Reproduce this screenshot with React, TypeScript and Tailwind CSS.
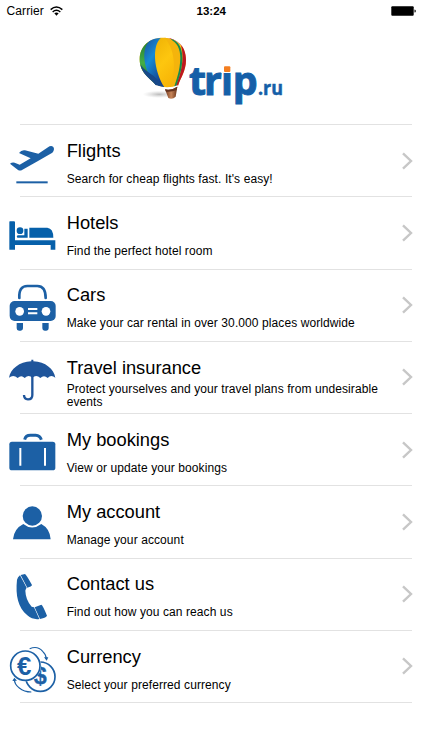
import type { ReactNode } from 'react';

const blue = '#1c60a5';

function BalloonLogo() {
  return (
    <svg width="165" height="80" viewBox="0 0 495 240" role="img" aria-label="trip.ru">
      <defs>
        <radialGradient id="shadow">
          <stop offset="0" stopColor="#777" stopOpacity=".5" />
          <stop offset="1" stopColor="#aaa" stopOpacity="0" />
        </radialGradient>
        <linearGradient id="yellow" x1="0" y1="0" x2="1" y2="1">
          <stop offset="0" stopColor="#e8a800" />
          <stop offset=".5" stopColor="#fdc60f" />
          <stop offset="1" stopColor="#f3a800" />
        </linearGradient>
        <linearGradient id="azure" x1="0" y1="0" x2=".6" y2="1">
          <stop offset="0" stopColor="#1d4f9b" />
          <stop offset=".45" stopColor="#168bd5" />
          <stop offset="1" stopColor="#153f8b" />
        </linearGradient>
        <linearGradient id="green" x1="0" y1="0" x2="0" y2="1">
          <stop offset="0" stopColor="#207b36" />
          <stop offset=".5" stopColor="#45ae46" />
          <stop offset="1" stopColor="#146c3d" />
        </linearGradient>
        <linearGradient id="basket">
          <stop offset="0" stopColor="#71391f" />
          <stop offset=".5" stopColor="#c8865a" />
          <stop offset="1" stopColor="#693217" />
        </linearGradient>
      </defs>
      <ellipse cx="88" cy="193" rx="50" ry="11" fill="url(#shadow)" />
      <path d="M78 166C60 143 29 130 29 88C29 49 59 23 98 23C140 23 168 49 168 90C168 123 151 145 144 167C128 176 96 176 78 166Z" fill="url(#yellow)" />
      <path d="M78 166C60 143 29 130 29 88C29 60 43 41 64 31C42 55 43 100 57 126Z" fill="url(#green)" />
      <path d="M78 166C43 128 30 61 58 34C68 27 80 24 92 24C66 48 70 119 103 172Z" fill="url(#azure)" />
      <path d="M78 166C66 148 38 139 31 103C43 123 66 131 84 151L103 172Z" fill="#174889" />
      <path d="M110 24C126 26 145 35 153 46C165 90 152 135 136 170L144 167C151 145 168 123 168 90C168 68 161 52 150 41C137 29 120 23 110 24Z" fill="#bd1722" />
      <path d="M122 27C145 32 157 53 157 83C157 118 146 146 138 169L131 171C142 141 151 91 138 50Z" fill="#178a4e" />
      <path d="M118 26C142 36 151 57 151 84C150 121 140 149 132 171L120 173C138 127 138 61 104 23Z" fill="#f4b40c" />
      <path d="M78 168C99 177 126 176 144 168" fill="none" stroke="#fff" strokeWidth="5" />
      <path d="M105 178Q124 182 142 170L137 200Q127 210 115 204Z" fill="url(#basket)" />
      <path d="M105 178Q124 182 142 170L140 180Q124 187 108 185Z" fill="#64331f" />
      <g fill="#155fa8" stroke="#155fa8" fontFamily='"Open Sans", sans-serif' fontWeight="700">
        <text x="177 222 273 308" y="196" fontSize="118" strokeWidth="3">trip</text>
        <text x="384" y="196" fontSize="57" strokeWidth="1.500" textLength="75" lengthAdjust="spacingAndGlyphs">.ru</text>
      </g>
      <path d="M274 96h36v33h-36z" fill="#fff" />
      <rect x="282" y="109" width="19" height="17" rx="3" fill="#f47e20" />
    </svg>
  );
}

function Icon({ top, children }: { top: number; children: ReactNode }) {
  return (
    <svg className="shrink-0" width="56" height="72" viewBox={`0 ${top} 168 216`} fill={blue} aria-hidden="true">
      {children}
    </svg>
  );
}

const rows = [
  {
    title: 'Flights',
    text: "Search for cheap flights fast. It's easy!",
    icon: (
      <Icon top={12}>
        <path d="M30 128Q36 123 44 125L59 131L92 112L57 96Q64 86 75 88L115 98L144 79Q153 72 160 78Q165 86 157 95L114 120L66 147Q60 151 53 146Z" />
        <path d="M49 181h94v6H49z" />
      </Icon>
    ),
  },
  {
    title: 'Hotels',
    text: 'Find the perfect hotel room',
    icon: (
      <Icon top={-11}>
        <g fill="#0660aa">
          <path d="M29 62h13q3 0 3 3v54h121v28h-14v-14H45v14H28V64z" />
          <circle cx="60" cy="90" r="10" />
          <path d="M73 84h10v27H52q-4-5 1-7h20zM88 81h54q18 2 18 30H88z" />
        </g>
      </Icon>
    ),
  },
  {
    title: 'Cars',
    text: 'Make your car rental in over 30.000 places worldwide',
    icon: (
      <Icon top={-20}>
        <path d="M58 67Q56 31 82 31H112Q137 31 137 67" fill="none" stroke={blue} strokeWidth="8" strokeLinecap="round" />
        <rect x="29" y="76" width="138" height="60" rx="15" />
        <path d="M50 142h19v16q0 7-7 7h-5q-7 0-7-7zM127 142h19v16q0 7-7 7h-5q-7 0-7-7z" />
        <circle cx="59" cy="107" r="13" fill="#fff" />
        <circle cx="138" cy="107" r="13" fill="#fff" />
        <path d="M84 97h28v6H84zM84 110h28v6H84z" fill="#fff" />
      </Icon>
    ),
  },
  {
    title: 'Travel insurance',
    text: 'Protect yourselves and your travel plans from undesirable events',
    icon: (
      <Icon top={-13}>
        <g fill="#1f559b">
          <path d="M27 97C31 72 58 49 94 48V43h6v5C136 49 162 72 166 97Q153 87 143 98Q132 87 121 98Q109 87 97 97Q86 87 74 98Q64 87 53 98Q40 87 27 97Z" />
          <path d="M97 92V149Q97 162 84 162Q72 161 72 149" fill="none" stroke="#1f559b" strokeWidth="7" />
        </g>
      </Icon>
    ),
  },
  {
    title: 'My bookings',
    text: 'View or update your bookings',
    icon: (
      <Icon top={-21}>
        <path d="M74 56Q77 43 91 43H107Q120 44 124 56" fill="none" stroke={blue} strokeWidth="9" />
        <rect x="28" y="62" width="138" height="86" rx="8" />
        <path d="M58 81h6v53h-6zM132 81h6v53h-6z" fill="#fff" />
      </Icon>
    ),
  },
  {
    title: 'My account',
    text: 'Manage your account',
    icon: (
      <Icon top={-29}>
        <circle cx="97" cy="61" r="29" />
        <path d="M39 131Q42 99 70 85Q96 106 124 85Q150 99 152 131Z" />
      </Icon>
    ),
  },
  {
    title: 'Contact us',
    text: 'Find out how you can reach us',
    icon: (
      <Icon top={-22}>
        <path d="M60 30L80 67Q77 72 76 76Q77 104 95 124L102 126L118 161Q98 164 82 150C54 126 46 91 51 43Q53 35 60 30ZM62 29L75 26Q79 28 96 59Q95 64 82 67ZM104 126L124 118Q128 119 141 151Q140 156 120 161Z" />
      </Icon>
    ),
  },
  {
    title: 'Currency',
    text: 'Select your preferred currency',
    icon: (
      <Icon top={-16}>
        <circle cx="121" cy="124" r="44" fill="none" stroke={blue} strokeWidth="5" />
        <text x="101" y="147" fontSize="72" textLength="39" lengthAdjust="spacingAndGlyphs" fontFamily='"Liberation Sans", sans-serif' fontWeight="700" stroke={blue} strokeWidth="1">$</text>
        <circle cx="76" cy="91" r="47" fill="#fff" />
        <circle cx="76" cy="91" r="44" fill="none" stroke={blue} strokeWidth="5" />
        <path d="M89 40Q113 30 128 48Q138 57 139 71M94 170Q72 170 58 158Q43 147 43 131" fill="none" stroke={blue} strokeWidth="3.500" />
        <path d="M132 66h13l-5 10zM37 137l6-10 8 9z" />
        <text x="51" y="119" fontSize="80" textLength="43" lengthAdjust="spacingAndGlyphs" fontFamily='"Liberation Sans", sans-serif' fontWeight="700">€</text>
      </Icon>
    ),
  },
];

export default function App() {
  return (
    <div className="h-[750px] w-[422px] overflow-hidden bg-white font-['Liberation_Sans',Arial,sans-serif] text-black">
      <div className="grid h-[22px] grid-cols-3 items-center pr-1.5 pl-[6.5px]">
        <div className="flex items-center gap-1.5 text-[12px] tracking-[0.1px]">
          <span>Carrier</span>
          <svg width="13" height="10" viewBox="0 0 39 30" fill="none" stroke="#000" strokeWidth="4.500">
            <path d="M2 11Q19 -5 37 11M8 18Q19 8 31 18" />
            <path d="M13 22Q19 17 26 22L19.500 29Z" fill="#000" stroke="none" />
          </svg>
        </div>
        <div className="pt-0.5 text-center text-[11.5px] font-bold">13:24</div>
        <div className="flex items-center justify-end">
          <svg width="25" height="10" viewBox="0 0 25 10">
            <rect x=".3" y=".3" width="22.400" height="9.400" rx="1" />
            <path d="M23.500 3.500q1.300 0 1.300 1.500t-1.300 1.500z" />
          </svg>
        </div>
      </div>

      <header className="flex h-[102px] pt-2 pl-[130px]">
        <BalloonLogo />
      </header>

      <div className="mr-[10.5px] ml-5 h-px bg-[#e2e2e2]" />
      {rows.map(({ title, text, icon }) => (
        <div key={title}>
          <div className="flex h-[71.25px] items-center">
            {icon}
            <div className="ml-[10.7px] flex h-full w-[325px] flex-col pt-[14.8px]">
              <div className="text-[18.3px] leading-[21px]">{title}</div>
              <div className="mt-[2.1px] flex h-[36px] items-center text-[12px] leading-[13.5px] tracking-[0.09px]">
                {text}
              </div>
            </div>
            <svg className="ml-[9px] shrink-0" width="14" height="20" viewBox="0 0 14 20" fill="none" stroke="#c7c7c7" strokeWidth="2.400">
              <path d="M2 2.300L10 10L2 17.700" />
            </svg>
          </div>
          <div className="mr-[10.5px] ml-5 h-px bg-[#e2e2e2]" />
        </div>
      ))}
    </div>
  );
}
